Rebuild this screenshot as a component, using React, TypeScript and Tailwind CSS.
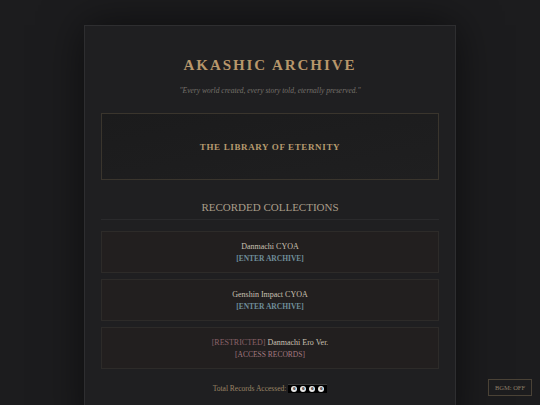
import React from "react";

const serif = { fontFamily: '"Liberation Serif", "DejaVu Serif", serif' };

type Entry = { title: string; link: string; restricted?: boolean };

const entries: Entry[] = [
  { title: "Danmachi CYOA", link: "[ENTER ARCHIVE]" },
  { title: "Genshin Impact CYOA", link: "[ENTER ARCHIVE]" },
  { title: "Danmachi Ero Ver.", link: "[ACCESS RECORDS]", restricted: true },
];

function Counter() {
  return (
    <span className="inline-flex items-center gap-[3px] bg-black px-[3px] h-[9px] border-t border-[#3a3a3a] align-middle">
      {[0, 0, 0, 0].map((d, i) => (
        <span
          key={i}
          className="w-[6px] h-[6px] rounded-full bg-[#e8e8e8] text-black text-[5px] leading-[6px] font-bold flex items-center justify-center"
        >
          {d}
        </span>
      ))}
    </span>
  );
}

export default function App() {
  return (
    <div className="min-h-[405px] h-[405px] overflow-hidden bg-[#1c1c1e] relative" style={serif}>
      <div className="w-[372px] mx-auto mt-[25px] bg-[#1f1f21] border border-[#2e2e30] shadow-[0_0_40px_rgba(0,0,0,0.55)] px-[16px] pt-[30px] pb-[40px]">
        <h1 className="text-center text-[15px] leading-[18px] font-bold tracking-[0.13em] text-[#b8976b]">
          AKASHIC ARCHIVE
        </h1>
        <p className="text-center italic text-[7.5px] leading-[10px] text-[#75716b] mt-[12px]">
          "Every world created, every story told, eternally preserved."
        </p>

        <div className="mt-[17px] h-[67px] border border-[#3a352d] bg-gradient-to-br from-[#1b1b1c] to-[#1f1f20] flex items-center justify-center">
          <span className="text-[9px] font-bold tracking-[0.07em] text-[#b59a6e] translate-y-[1px]">
            THE LIBRARY OF ETERNITY
          </span>
        </div>

        <h2 className="mt-[20px] text-center text-[11px] leading-[14px] text-[#a99d89] pb-[5px] border-b border-[#2a2a2c]">
          RECORDED COLLECTIONS
        </h2>

        <div className="mt-[11px] flex flex-col gap-[6px]">
          {entries.map((e) => (
            <div
              key={e.title}
              className="h-[42px] bg-[#221f1f] border border-[#2d2b29] flex flex-col items-center justify-center gap-[2px] pt-[2px]"
            >
              <div className="text-[8px] leading-[10px] text-[#c9c0b2]">
                {e.restricted && <span className="text-[#8a6269]">[RESTRICTED] </span>}
                {e.title}
              </div>
              <div
                className={
                  "text-[7.5px] leading-[10px] " +
                  (e.restricted ? "text-[#a27a80]" : "text-[#6f8e9a] font-semibold")
                }
              >
                {e.link}
              </div>
            </div>
          ))}
        </div>

        <div className="mt-[14px] flex items-center justify-center gap-[2px] text-[7.5px] text-[#9a8566]">
          <span>Total Records Accessed:</span>
          <Counter />
        </div>
      </div>

      <div className="absolute right-[8px] bottom-[9px] w-[44px] h-[17px] border border-[#4a4236] bg-[#1c1c1e] flex items-center justify-center text-[6.5px] text-[#8c7c66]">
        BGM: OFF
      </div>
    </div>
  );
}
